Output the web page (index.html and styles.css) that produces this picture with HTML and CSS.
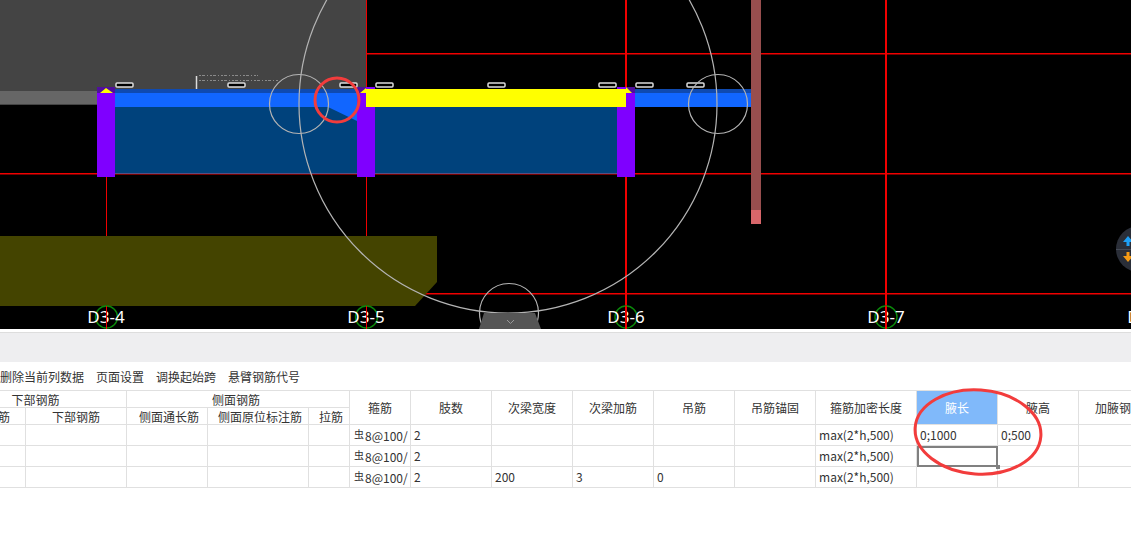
FILE: index.html
```html
<!DOCTYPE html>
<html lang="zh">
<head>
<meta charset="utf-8">
<title>梁平法表格</title>
<link rel="stylesheet" href="styles.css">
</head>
<body>
<svg class="cad" viewBox="0 0 1131 329" width="1131" height="329">
  <rect class="f-dark" x="0" y="0" width="366" height="91"/>
  <rect class="f-mid" x="0" y="91" width="97" height="13"/>
  <rect class="f-line" x="0" y="104" width="97" height="1"/>
  <g class="f-red">
    <rect x="366" y="53" width="765" height="1.5"/>
    <rect x="0" y="173" width="1131" height="1.5"/>
    <rect x="415" y="293" width="716" height="1.5"/>
    <rect x="106" y="177" width="1" height="59"/>
    <rect x="366" y="0" width="1" height="90"/>
    <rect x="366" y="177" width="1" height="59"/>
    <rect x="625" y="0" width="2" height="329"/>
    <rect x="885" y="0" width="2" height="329"/>
  </g>
  <polygon class="f-olive" points="0,236 437,236 437,282 415,306 0,306"/>
  <rect class="f-body" x="115" y="107" width="502" height="66"/>
  <rect class="f-edge" x="115" y="173" width="502" height="1"/>
  <rect class="f-bright" x="115" y="93" width="636" height="14"/>
  <rect class="f-top" x="115" y="89" width="641" height="4"/>
  <polygon class="f-bright" points="328,107 357,107 357,121"/>
  <rect class="f-brown" x="751" y="0" width="10" height="210"/>
  <rect class="f-rose" x="751" y="210" width="10" height="14"/>
  <rect class="f-purple" x="97" y="87" width="18" height="90"/>
  <rect class="f-purple" x="357" y="87" width="18" height="90"/>
  <rect class="f-purple" x="617" y="87" width="18" height="90"/>
  <rect class="f-violet" x="97" y="87" width="18" height="6"/>
  <rect class="f-violet" x="357" y="87" width="9" height="6"/>
  <rect class="f-violet" x="626" y="87" width="9" height="6"/>
  <rect class="f-yellow" x="366" y="89" width="260" height="18"/>
  <polygon class="f-yellow" points="100,93 106,88 113,93"/>
  <polygon class="f-yellow" points="360,93 366,88 366,93"/>
  <polygon class="f-yellow" points="626,87 632,93 626,93"/>
  <g class="bars">
    <rect x="116" y="83" width="17" height="4" rx="1"/>
    <rect x="228" y="83" width="17" height="4" rx="1"/>
    <rect x="340" y="83" width="17" height="4" rx="1"/>
    <rect x="376" y="83" width="17" height="4" rx="1"/>
    <rect x="488" y="83" width="17" height="4" rx="1"/>
    <rect x="599" y="83" width="17" height="4" rx="1"/>
    <rect x="636" y="83" width="17" height="4" rx="1"/>
    <rect x="687" y="83" width="17" height="4" rx="1"/>
  </g>
  <path class="tick" d="M196.5 76V89"/>
  <path class="speck" d="M199 75.5H258M199 80.5H278"/>
  <g class="arcs">
    <circle cx="299" cy="104" r="29.5"/>
    <circle cx="718" cy="104" r="29.5"/>
    <circle cx="508" cy="104" r="209"/>
    <circle cx="509" cy="313" r="29.5"/>
  </g>
  <polygon class="f-tab" points="484,313 535,313 541,329 479,329"/>
  <path class="chev" d="M507 320L510.500 323.500L514 320"/>
  <g class="axis">
    <circle cx="106.500" cy="317" r="11"/>
    <circle cx="366.500" cy="317" r="11"/>
    <circle cx="626" cy="317" r="11"/>
    <circle cx="886" cy="317" r="11"/>
  </g>
  <text class="lbl" x="106" y="323">D3-4</text>
  <text class="lbl" x="366" y="323">D3-5</text>
  <text class="lbl" x="626" y="323">D3-6</text>
  <text class="lbl" x="886" y="323">D3-7</text>
  <text class="lbl" x="1146" y="323">D3-8</text>
  <g class="f-red">
    <rect x="106" y="306" width="1" height="23"/>
    <rect x="366" y="306" width="1" height="23"/>
    <rect x="625" y="306" width="2" height="23"/>
    <rect x="885" y="306" width="2" height="23"/>
  </g>
  <circle class="f-nav" cx="1139" cy="249" r="23"/>
  <path class="nav-line" d="M1116 249.500H1131"/>
  <path class="f-up" d="M1128 236L1133 242H1129.500V246H1126.500V242H1123Z"/>
  <path class="f-down" d="M1128 262L1133 256H1129.500V252H1126.500V256H1123Z"/>
  <circle class="ring" cx="337" cy="100" r="22"/>
</svg>

<div class="gap"></div>
<div class="band"></div>

<div class="toolbar">
  <span>删除当前列数据</span>
  <span>页面设置</span>
  <span>调换起始跨</span>
  <span>悬臂钢筋代号</span>
</div>

<table class="grid">
  <colgroup>
    <col class="w79"><col class="w101"><col class="w81"><col class="w101"><col class="w41">
    <col class="w61"><col class="w81"><col class="w81"><col class="w81"><col class="w81"><col class="w81">
    <col class="w101"><col class="w81"><col class="w81"><col class="w81">
  </colgroup>
  <thead>
    <tr>
      <th colspan="2" class="up shift-a">下部钢筋</th>
      <th colspan="3" class="up shift-b">侧面钢筋</th>
      <th rowspan="2">箍筋</th>
      <th rowspan="2">肢数</th>
      <th rowspan="2">次梁宽度</th>
      <th rowspan="2">次梁加筋</th>
      <th rowspan="2">吊筋</th>
      <th rowspan="2">吊筋锚固</th>
      <th rowspan="2">箍筋加密长度</th>
      <th rowspan="2" class="active">腋长</th>
      <th rowspan="2">腋高</th>
      <th rowspan="2">加腋钢筋</th>
    </tr>
    <tr>
      <th class="up first">下部通长筋</th>
      <th class="up">下部钢筋</th>
      <th class="up shift-c">侧面通长筋</th>
      <th class="up shift-c">侧面原位标注筋</th>
      <th class="up shift-c">拉筋</th>
    </tr>
  </thead>
  <tbody>
    <tr>
      <td></td><td></td><td></td><td></td><td></td>
      <td><span class="sym">虫</span>8@100/</td><td>2</td><td></td><td></td><td></td><td></td>
      <td>max(2*h,500)</td><td>0;1000</td><td>0;500</td><td></td>
    </tr>
    <tr>
      <td></td><td></td><td></td><td></td><td></td>
      <td><span class="sym">虫</span>8@100/</td><td>2</td><td></td><td></td><td></td><td></td>
      <td>max(2*h,500)</td><td class="selected"></td><td></td><td></td>
    </tr>
    <tr>
      <td></td><td></td><td></td><td></td><td></td>
      <td><span class="sym">虫</span>8@100/</td><td>2</td><td>200</td><td>3</td><td>0</td><td></td>
      <td>max(2*h,500)</td><td></td><td></td><td></td>
    </tr>
  </tbody>
</table>

<svg class="oval" viewBox="0 0 140 100" width="140" height="100">
  <ellipse cx="68" cy="47" rx="63" ry="42" transform="rotate(4 68 47)"/>
</svg>
</body>
</html>
```

FILE: styles.css
```css
* { box-sizing: border-box; }

html, body {
  margin: 0;
  height: 539px;
  overflow: hidden;
  background: #fff;
}

body {
  position: relative;
  font-family: "Noto Sans CJK SC", "Noto Sans", sans-serif;
  font-size: 12px;
  color: #333;
}

/* CAD viewport */
.cad { display: block; background: #000; }
.f-dark { fill: #444; }
.f-mid { fill: #666; }
.f-line { fill: #444; }
.f-olive { fill: #444400; }
.f-body { fill: #00427c; }
.f-edge { fill: #5a4f80; }
.f-bright { fill: #1166ff; }
.f-top { fill: #0f4ab0; }
.f-yellow { fill: #ffff00; }
.f-brown { fill: #984e4e; }
.f-rose { fill: #d8666a; }
.f-purple { fill: #7f00ff; }
.f-violet { fill: #50109c; }
.f-tab { fill: #555; }
.f-nav { fill: #2a2e38; }
.f-up { fill: #1ea0f5; }
.f-down { fill: #f59a14; }
.f-red rect { fill: #f00000; }
.bars rect { fill: #000; stroke: #ddd; stroke-width: 1.5; }
.tick { stroke: #ddd; stroke-width: 1.5; fill: none; }
.speck { stroke: #8a8a8a; stroke-width: 1; stroke-dasharray: 2 1 3 2 1 2; fill: none; }
.arcs circle { fill: none; stroke: #b4b4b4; stroke-width: 1.2; }
.chev { fill: none; stroke: #999; stroke-width: 1; }
.axis circle { fill: none; stroke: #0a8a0a; stroke-width: 1.4; }
.nav-line { stroke: #444a56; stroke-width: 1; }
.ring { fill: none; stroke: #f23c3c; stroke-width: 3; }
.lbl {
  fill: #fff;
  font-family: "Noto Sans", sans-serif;
  font-size: 17px;
  text-anchor: middle;
}

/* Divider and band */
.gap { height: 4px; background: #fff; border-bottom: 1px solid #ddd; }
.band { height: 29px; background: #eeeef0; }

/* Toolbar */
.toolbar {
  display: flex;
  gap: 12px;
  height: 28px;
  padding-top: 2px;
  align-items: center;
  line-height: 16px;
  white-space: nowrap;
}

/* Table */
.grid {
  border-collapse: collapse;
  table-layout: fixed;
  width: 1213px;
  margin-left: -54px;
}
.w41 { width: 41px; }
.w61 { width: 61px; }
.w79 { width: 79px; }
.w81 { width: 81px; }
.w101 { width: 101px; }

.grid th, .grid td {
  border: 1px solid #e0e0e0;
  padding: 0;
  overflow: hidden;
  white-space: nowrap;
  line-height: 16px;
}
.grid th {
  height: 17px;
  font-weight: 400;
  text-align: center;
}
.grid td {
  height: 21px;
  padding-left: 3px;
  text-align: left;
}
.grid .up { line-height: 14px; padding-top: 2px; }
.grid .shift-a { padding-right: 2px; }
.grid .shift-b { padding-right: 4px; }
.grid .shift-c { padding-left: 4px; }
.grid .first { padding-right: 12px; }
.grid .active { background: #80b9fa; color: #fff; }
.grid .selected {
  position: relative;
  overflow: visible;
  outline: 2px solid #808080;
  outline-offset: -2px;
}
.grid .selected::after {
  content: "";
  position: absolute;
  right: -3px;
  bottom: -3px;
  width: 4px;
  height: 4px;
  background: #808080;
}
.sym {
  font-size: 10px;
  vertical-align: 3px;
  margin-left: 1px;
  margin-right: 1px;
}

/* Hand-drawn annotation over the grid */
.oval {
  position: absolute;
  left: 910px;
  top: 385px;
  pointer-events: none;
}
.oval ellipse { fill: none; stroke: #f23c3c; stroke-width: 3; }
```
